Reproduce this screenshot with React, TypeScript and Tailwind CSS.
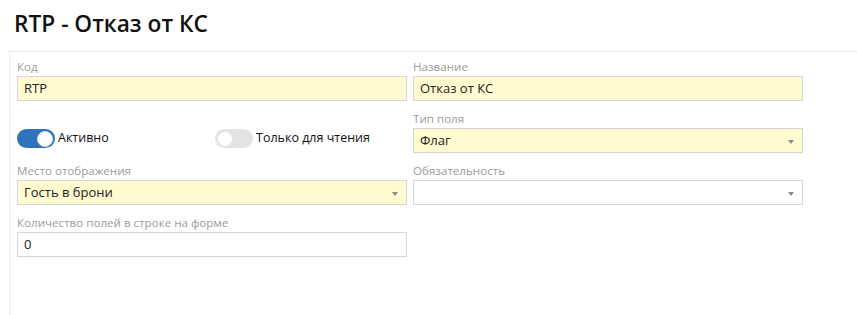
function Arrow() {
  return (
    <svg width="6" height="4" viewBox="0 0 6 4" className="absolute right-[8px] top-[11px]">
      <path d="M0 0h6L3 4z" fill="#8a8a8a" />
    </svg>
  )
}

function Field({ label, value, filled, select }: { label: string; value: string; filled?: boolean; select?: boolean }) {
  return (
    <div className="flex flex-col">
      <div className="h-[16px] mb-[1px] text-[11.6px] leading-[16px] text-[#9b9b9b]">{label}</div>
      <div
        className={`relative h-[25px] border border-[#d6d6d6] pl-[6px] text-[13px] leading-[23px] text-[#222] ${
          filled ? 'bg-[#fffad0]' : 'bg-white'
        }`}
      >
        {value}
        {select && <Arrow />}
      </div>
    </div>
  )
}

function Toggle({ label, on }: { label: string; on?: boolean }) {
  return (
    <div className="flex items-center">
      <div
        className={`flex items-center w-[38px] h-[19px] rounded-full px-[2px] ${
          on ? 'bg-[#2f73ba] justify-end' : 'bg-[#e3e3e3] justify-start'
        }`}
      >
        <div className="w-[16px] h-[16px] rounded-full bg-white border border-[#e6e6e6]" />
      </div>
      <span className="ml-[3px] text-[12.5px] text-[#111]">{label}</span>
    </div>
  )
}

export default function App() {
  return (
    <div className="w-[857px] h-[315px] overflow-hidden bg-white font-['Open_Sans',sans-serif]">
      <h1 className="pl-[14px] pt-[9px] h-[51px] text-[22.7px] leading-[30px] font-semibold text-[#111]">
        RTP - Отказ от КС
      </h1>
      <div className="ml-[9px] h-[300px] border-l border-t border-[#ebebeb] pl-[7px] pt-[7px]">
        <div className="grid grid-cols-[390px_390px] gap-x-[6px] gap-y-[10px]">
          <Field label="Код" value="RTP" filled />
          <Field label="Название" value="Отказ от КС" filled />
          <div className="flex items-end h-[42px] pb-[5px]">
            <div className="w-[198px]">
              <Toggle label="Активно" on />
            </div>
            <Toggle label="Только для чтения" />
          </div>
          <Field label="Тип поля" value="Флаг" filled select />
          <Field label="Место отображения" value="Гость в брони" filled select />
          <Field label="Обязательность" value="" select />
          <Field label="Количество полей в строке на форме" value="0" />
        </div>
      </div>
    </div>
  )
}
